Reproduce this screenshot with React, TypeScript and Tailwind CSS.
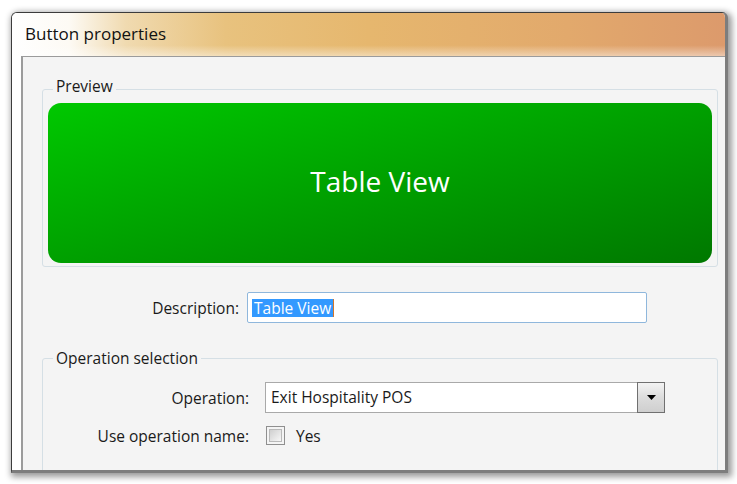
export default function App() {
  return (
    <div className="w-[737px] h-[484px] bg-white pt-[12px] pl-[11px] pr-[9px] pb-[11px] overflow-hidden font-['Open_Sans',sans-serif] text-[#1a1a1a]">
      <div className="h-full flex flex-col bg-white rounded-t-[6px] border-t border-l border-[#3c3c3c] border-r-[3px] border-r-[#7d7d7d] border-b-[3px] border-b-[#7d7d7d] shadow-[2px_2px_6px_2px_rgba(0,0,0,0.4)] overflow-hidden">
        <div className="h-[43px] shrink-0 pl-[13px] pt-[11px] text-[17px] leading-[20px] text-[#111] bg-[linear-gradient(180deg,rgba(255,255,255,0)_75%,rgba(255,255,255,0.45)_100%),linear-gradient(90deg,#ffffff_0%,#fdfaf4_8%,#f0dab0_16%,#e8c27e_30%,#e6b76e_50%,#e2a96c_78%,#dc9a6c_100%)]">
          Button properties
        </div>
        <div className="flex-1 flex min-h-0">
          <div className="w-[9px] shrink-0 bg-white" />
          <div className="flex-1 min-w-0 bg-[#f4f4f4] border-l-2 border-t border-[#9b9b9b] overflow-hidden">
            <fieldset className="mt-[19px] ml-[19px] mr-[7px] border border-[#d5dfe5] rounded-[3px] px-[5px] pt-[1px] pb-[3px]">
              <legend className="ml-[5px] px-[3px] pb-[6px] text-[15.5px] leading-[20px]">Preview</legend>
              <div className="h-[160px] pb-[4px] rounded-[13px] bg-[linear-gradient(to_bottom_right,#00c800,#00a000_50%,#007800)] flex items-center justify-center text-white text-[28px]">
                Table View
              </div>
            </fieldset>

            <div className="mt-[25px] flex items-center">
              <div className="w-[216px] text-right text-[15.5px] leading-[20px]">Description:</div>
              <div className="ml-[8px] w-[400px] h-[31px] border border-[#8fb7dc] rounded-[2px] bg-white flex items-center pl-[4px]">
                <span className="bg-[#3399ff] text-white px-[2px] leading-[18px] text-[15.5px]">Table View</span>
                <span className="w-px h-[18px] bg-[#d4762a]" />
              </div>
            </div>

            <fieldset className="mt-[25px] ml-[19px] mr-[7px] border border-[#d5dfe5] rounded-[3px] pt-[14px] h-[200px]">
              <legend className="ml-[10px] px-[3px] text-[15.5px] leading-[20px]">Operation selection</legend>
              <div className="flex items-center">
                <div className="w-[206px] text-right text-[15.5px] leading-[20px]">Operation:</div>
                <div className="ml-[16px] w-[400px] h-[31px] flex bg-white">
                  <div className="flex-1 border-y border-l border-[#a9a9a9] flex items-center pl-[5px] text-[15.5px]">
                    Exit Hospitality POS
                  </div>
                  <div className="w-[28px] border border-[#707070] bg-[linear-gradient(180deg,#f3f3f3,#dcdcdc_50%,#cfcfcf)] flex items-center justify-center">
                    <svg width="9" height="5" viewBox="0 0 9 5">
                      <path d="M0 0h9L4.5 5z" fill="#000" />
                    </svg>
                  </div>
                </div>
              </div>
              <div className="mt-[7px] h-[31px] flex items-center">
                <div className="w-[206px] text-right text-[15.5px] leading-[20px]">Use operation name:</div>
                <div className="ml-[17px] w-[19px] h-[19px] border border-[#8f8f8f] bg-[#f4f4f4] p-[2px]">
                  <div className="w-full h-full border border-[#b9b9b9] bg-[linear-gradient(135deg,#cfcfcf,#f7f7f7)]" />
                </div>
                <div className="ml-[11px] text-[15.5px] leading-[20px]">Yes</div>
              </div>
            </fieldset>
          </div>
        </div>
      </div>
    </div>
  );
}
